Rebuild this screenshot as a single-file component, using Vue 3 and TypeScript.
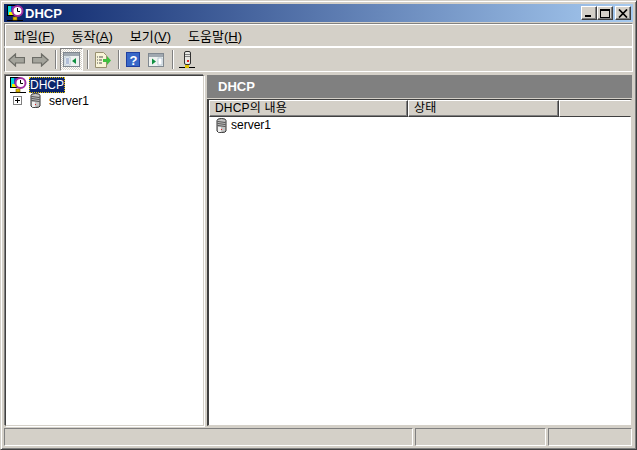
<script setup lang="ts">
const menus = [
  { label: '파일(', key: 'F' },
  { label: '동작(', key: 'A' },
  { label: '보기(', key: 'V' },
  { label: '도움말(', key: 'H' },
]
</script>

<template>
  <div class="win">
    <div class="title">
      <svg class="ico16" width="18" height="18" viewBox="0 0 18 18">
        <rect x="1.500" y="1.500" width="9" height="10" fill="#2040c0" stroke="#000" />
        <rect x="2" y="2" width="3" height="9" fill="#00d8d8" />
        <rect x="3" y="8" width="4" height="3" fill="#f0f000" />
        <circle cx="11.500" cy="7" r="5" fill="#fff" stroke="#a030a0" stroke-width="2" />
        <path d="M11.500 4v3.500h2.500" fill="none" stroke="#000" />
        <path d="M1 16.500h16" stroke="#000" />
        <rect x="7" y="13" width="4" height="3" fill="#e0c000" stroke="#806000" stroke-width=".6" />
      </svg>
      <span class="title-text">DHCP</span>
      <div class="caps">
        <button class="cap"><i class="min"></i></button>
        <button class="cap"><i class="max"></i></button>
        <button class="cap close">
          <svg width="10" height="9" viewBox="0 0 10 9"><path d="M1 0.500l8 8M9 0.500l-8 8" stroke="#000" stroke-width="1.700" /></svg>
        </button>
      </div>
    </div>

    <div class="band menu">
      <span v-for="m in menus" :key="m.key" class="menu-item">{{ m.label }}<u>{{ m.key }}</u>)</span>
    </div>

    <div class="band tools">
      <svg class="tool" width="17" height="14" viewBox="0 0 17 14"><path d="M.8 7l6.700-6v3.500h9V10h-9v3z" fill="#a4a49c" stroke="#6c6c66" stroke-width="1.200" /></svg>
      <svg class="tool t2" width="17" height="14" viewBox="0 0 17 14"><path d="M16.200 7l-6.700-6v3.500h-9V10h9v3z" fill="#a4a49c" stroke="#6c6c66" stroke-width="1.200" /></svg>
      <i class="sep s1"></i>
      <span class="pressed">
        <svg width="17" height="15" viewBox="0 0 17 15">
          <rect x=".5" y=".5" width="16" height="14" fill="#eef2f0" stroke="#808890" />
          <rect x="1" y="1" width="15" height="3" fill="#a0a8b0" />
          <rect x="2" y="5" width="5" height="8" fill="#fff" stroke="#90a8c0" stroke-width=".6" />
          <path d="M3 7h3M3 9h3M3 11h3" stroke="#4060a0" stroke-width=".8" />
          <path d="M13 6v6l-4-3z" fill="#109040" />
        </svg>
      </span>
      <i class="sep s2"></i>
      <svg class="tool t3" width="17" height="16" viewBox="0 0 17 16">
        <path d="M1.500 .5h8l3 3v12h-11z" fill="#f8f4d8" stroke="#989070" />
        <path d="M3 5h1M3 8h1M3 11h1M5 5h4M5 8h3M5 11h3" stroke="#505050" />
        <path d="M9 7h4v-3l4 4.500-4 4.500v-3h-4z" fill="#40c040" />
      </svg>
      <i class="sep s3"></i>
      <svg class="tool t4" width="14" height="15" viewBox="0 0 14 15">
        <rect width="14" height="15" fill="#2040a0" />
        <rect x="1" y="1" width="12" height="13" fill="#3868c8" />
        <text x="3.500" y="12.500" class="q">?</text>
      </svg>
      <svg class="tool t5" width="16" height="14" viewBox="0 0 16 14">
        <rect x=".5" y=".5" width="15" height="13" fill="#eef2f0" stroke="#808890" />
        <rect x="1" y="1" width="14" height="3" fill="#a0a8b0" />
        <rect x="10" y="5" width="4" height="7" fill="#fff" stroke="#90a8c0" stroke-width=".6" />
        <path d="M4 5.500v6l4-3z" fill="#109040" />
      </svg>
      <i class="sep s4"></i>
      <svg class="tool t6" width="16" height="18" viewBox="0 0 16 18">
        <rect x="5.500" y=".5" width="6" height="13" rx="1.500" fill="#e8e8e4" stroke="#303030" />
        <path d="M6 3.500h5M6 5.500h5" stroke="#808080" />
        <rect x="8" y="9" width="2" height="2" fill="#e02020" />
        <path d="M0 16.500h16" stroke="#000" />
        <rect x="6" y="14" width="4" height="3" fill="#e0c000" />
      </svg>
    </div>

    <div class="panes">
      <div class="tree">
        <div class="node root">
          <svg width="18" height="18" viewBox="0 0 18 18">
            <rect x="1.500" y="1.500" width="9" height="10" fill="#2040c0" stroke="#000" />
            <rect x="2" y="2" width="3" height="9" fill="#00d8d8" />
            <rect x="3" y="8" width="4" height="3" fill="#f0f000" />
            <circle cx="11.500" cy="7" r="5" fill="#fff" stroke="#a030a0" stroke-width="2" />
            <path d="M11.500 4v3.500h2.500" fill="none" stroke="#000" />
            <path d="M1 16.500h16" stroke="#000" />
            <rect x="7" y="13" width="4" height="3" fill="#e0c000" stroke="#806000" stroke-width=".6" />
          </svg>
          <span class="selected">DHCP</span>
        </div>
        <div class="node child">
          <span class="plus"></span>
          <svg class="srv" width="11" height="15" viewBox="0 0 11 15">
            <path d="M1 2.500Q1 .5 5.500 .5T10 2.500V13q0 1.500-4.500 1.500T1 13z" fill="#c4c4c4" stroke="#303030" />
            <path d="M1.500 3.500l8 1M1.500 5.500l8 1M1.500 7.500l8 1" stroke="#505050" />
            <rect x="2" y="9" width="3" height="5" fill="#f0f0f0" />
            <rect x="5" y="11" width="1" height="1" fill="#e02020" />
          </svg>
          <span class="srv-label">server1</span>
        </div>
      </div>

      <div class="detail">
        <div class="detail-head">DHCP</div>
        <div class="list">
          <div class="cols">
            <div class="col c1">DHCP의 내용</div>
            <div class="col c2">상태</div>
            <div class="col c3"></div>
          </div>
          <div class="row">
            <svg class="srv" width="11" height="15" viewBox="0 0 11 15">
              <path d="M1 2.500Q1 .5 5.500 .5T10 2.500V13q0 1.500-4.500 1.500T1 13z" fill="#c4c4c4" stroke="#303030" />
              <path d="M1.500 3.500l8 1M1.500 5.500l8 1M1.500 7.500l8 1" stroke="#505050" />
              <rect x="2" y="9" width="3" height="5" fill="#f0f0f0" />
              <rect x="5" y="11" width="1" height="1" fill="#e02020" />
            </svg>
            <span>server1</span>
          </div>
        </div>
      </div>
    </div>

    <div class="status">
      <div class="cell s-a"></div>
      <div class="cell s-b"></div>
      <div class="cell s-c"></div>
    </div>
  </div>
</template>

<style>
html, body { margin: 0; background: #d4d0c8; }
</style>

<style scoped>
* { box-sizing: border-box; }
.win {
  width: 637px;
  height: 450px;
  background: #d4d0c8;
  border: 1px solid;
  border-color: #d4d0c8 #404040 #404040 #d4d0c8;
  box-shadow: inset 1px 1px 0 #fff, inset -1px -1px 0 #808080;
  padding: 3px;
  display: flex;
  flex-direction: column;
  font-family: "Liberation Sans", "Noto Sans CJK KR", sans-serif;
  font-size: 12px;
  color: #000;
  overflow: hidden;
}
.title {
  height: 18px;
  flex: none;
  display: flex;
  align-items: center;
  padding-left: 2px;
  background: linear-gradient(90deg, #0a246a 0%, #a6caf0 100%);
  color: #fff;
  font-weight: 700;
  font-size: 13px;
}
.ico16 { flex: none; }
.title-text { margin-left: 1px; }
.caps { margin-left: auto; display: flex; padding-right: 2px; }
.cap {
  width: 16px;
  height: 14px;
  padding: 0;
  background: #d4d0c8;
  border: 1px solid;
  border-color: #fff #404040 #404040 #fff;
  box-shadow: inset -1px -1px 0 #808080;
  display: flex;
  align-items: center;
  justify-content: center;
}
.close { margin-left: 2px; }
.min { width: 6px; height: 2px; background: #000; margin-top: 6px; margin-right: 2px; }
.max { width: 10px; height: 9px; border: 1px solid #000; border-top-width: 2px; }
.band {
  flex: none;
  border: 1px solid;
  display: flex;
  align-items: center;
}
.menu {
  height: 24px;
  margin-top: 1px;
  padding-left: 9px;
  font-size: 13px;
  border-color: #808080 #fff #fff #808080;
  box-shadow: inset 1px 1px 0 #fff;
}
.menu-item { margin-right: 17px; }
.tools {
  height: 25px;
  padding-left: 3px;
  border-color: #fff #fff #fff #808080;
  box-shadow: inset 1px 0 0 #fff;
}
.tool { flex: none; }
.t2 { margin-left: 7px; }
.sep {
  flex: none;
  width: 2px;
  height: 19px;
  border-left: 1px solid #808080;
  border-right: 1px solid #fff;
}
.s1 { margin-left: 6px; }
.pressed {
  flex: none;
  width: 23px;
  height: 23px;
  margin-left: 3px;
  display: flex;
  align-items: center;
  justify-content: center;
  border: 1px solid;
  border-color: #808080 #fff #fff #808080;
  background: repeating-conic-gradient(#fff 0 25%, #d4d0c8 0 50%) 0 0 / 2px 2px;
}
.s2 { margin-left: 4px; }
.t3 { margin-left: 5px; }
.s3 { margin-left: 7px; }
.t4 { margin-left: 6px; }
.t5 { margin-left: 8px; }
.s4 { margin-left: 8px; }
.t6 { margin-left: 5px; }
.q { font-size: 13px; font-weight: 700; fill: #fff; }
.panes {
  flex: 1;
  min-height: 0;
  margin-top: 3px;
  margin-right: 1px;
  display: flex;
  gap: 3px;
}
.tree {
  width: 199px;
  margin-left: 1px;
  flex: none;
  background: #fff;
  border: 1px solid;
  border-color: #404040 #d4d0c8 #d4d0c8 #404040;
  box-shadow: -1px -1px 0 #808080, 1px 1px 0 #fff;
  padding: 1px 0 0 3px;
}
.node { display: flex; align-items: center; height: 15px; }
.root { gap: 2px; height: 16px; }
.selected {
  background: #0a246a;
  color: #fff;
  outline: 1px dotted #e0c000;
  outline-offset: -1px;
  padding: 0 1px;
  height: 16px;
  line-height: 16px;
}
.child { padding-left: 4px; }
.plus {
  width: 9px;
  height: 9px;
  flex: none;
  border: 1px solid #808080;
  background:
    linear-gradient(#000, #000) center / 5px 1px no-repeat,
    linear-gradient(#000, #000) center / 1px 5px no-repeat,
    #fff;
}
.child .srv { margin-left: 8px; }
.srv { flex: none; }
.srv-label { margin-left: 8px; }
.detail {
  flex: 1;
  min-width: 0;
  display: flex;
  flex-direction: column;
}
.detail-head {
  height: 23px;
  flex: none;
  background: #808080;
  color: #fff;
  font-weight: 700;
  font-size: 13px;
  line-height: 23px;
  padding-left: 11px;
}
.list {
  flex: 1;
  min-height: 0;
  margin-top: 1px;
  background: #fff;
  border-left: 2px solid #404040;
  border-top: 1px solid #404040;
  border-right: 1px solid #d4d0c8;
  border-bottom: 1px solid #d4d0c8;
}
.cols { display: flex; height: 17px; }
.col {
  height: 17px;
  background: #d4d0c8;
  border: 1px solid;
  border-color: #fff #404040 #404040 #fff;
  box-shadow: inset -1px -1px 0 #808080;
  line-height: 15px;
  padding-left: 5px;
  letter-spacing: .2px;
}
.c1 { width: 199px; flex: none; }
.c2 { width: 151px; flex: none; }
.c3 { flex: 1; border-right-color: #d4d0c8; box-shadow: none; }
.row { display: flex; align-items: center; height: 16px; padding-left: 7px; gap: 4px; }
.status {
  flex: none;
  height: 18px;
  margin-top: 2px;
  padding-right: 1px;
  display: flex;
  gap: 2px;
}
.cell {
  border: 1px solid;
  border-color: #808080 #fff #fff #808080;
  height: 18px;
}
.s-a { width: 409px; flex: none; }
.s-b { width: 131px; flex: none; }
.s-c { flex: 1; }
</style>
